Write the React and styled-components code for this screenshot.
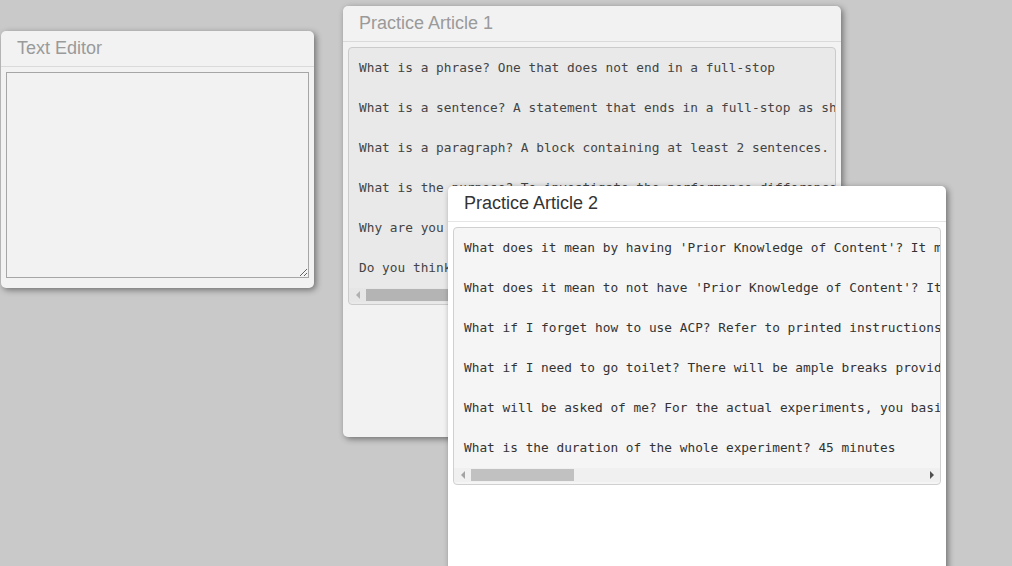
import React from 'react'
import styled, {createGlobalStyle} from 'styled-components'

const GlobalStyle = createGlobalStyle`
  html, body {
    margin: 0;
    padding: 0;
    background: #c9c9c9;
    overflow: hidden;
  }
  #root {
    width: 1012px;
    height: 566px;
  }
`

const Desktop = styled.div`
  position: relative;
  width: 1012px;
  height: 566px;
  background: #c9c9c9;
  overflow: hidden;
  font-family: "Liberation Sans", Arial, sans-serif;
`

// windows sit on a free canvas, so their place is given by props
const Window = styled.section`
  position: absolute;
  left: ${p => p.$x}px;
  top: ${p => p.$y}px;
  width: ${p => p.$w}px;
  height: ${p => p.$h}px;
  box-sizing: border-box;
  display: flex;
  flex-direction: column;
  background: ${p => p.$active ? '#ffffff' : '#f2f2f2'};
  border-radius: 5px;
  box-shadow: 2px 2px 6px rgba(0, 0, 0, 0.45);
  z-index: ${p => p.$z};
`

const Header = styled.header`
  height: 35px;
  flex: none;
  display: flex;
  align-items: center;
  padding: 0 16px;
  border-bottom: 1px solid ${p => p.$active ? '#e5e5e5' : '#dadada'};
`

const Title = styled.h3`
  margin: 0;
  font-size: 18px;
  font-weight: normal;
  color: ${p => p.$active ? '#333333' : '#9a9a9a'};
`

const Body = styled.div`
  flex: 1;
  display: flex;
  flex-direction: column;
  padding: 5px 5px 10px;
  min-height: 0;
`

const Editor = styled.textarea`
  box-sizing: border-box;
  width: 100%;
  height: 206px;
  margin: 0;
  background: #f2f2f2;
  border: 1px solid #a6a6a6;
  outline: none;
  resize: both;
  font-family: "Liberation Sans", Arial, sans-serif;
`

const Pre = styled.div`
  box-sizing: border-box;
  border: 1px solid ${p => p.$active ? '#d0d0d0' : '#cbcbcb'};
  border-radius: 4px;
  background: ${p => p.$active ? '#f5f5f5' : '#e9e9e9'};
  display: flex;
  flex-direction: column;
  overflow: hidden;
`

const Lines = styled.div`
  padding: 10px 10px 10px;
  overflow: hidden;
  white-space: pre;
  font-family: "DejaVu Sans Mono", "Liberation Mono", monospace;
  font-size: 12.8px;
  line-height: 20px;
  color: ${p => p.$active ? '#333333' : '#444444'};
`

const Line = styled.div`
  height: 20px;
  & + & {
    margin-top: 20px;
  }
`

const Track = styled.div`
  height: 14px;
  margin-bottom: 2px;
  display: flex;
  align-items: center;
  background: ${p => p.$active ? '#f0f0f0' : '#e6e6e6'};
`

const Arrow = styled.div`
  width: 17px;
  height: 14px;
  flex: none;
  display: flex;
  align-items: center;
  justify-content: center;
  &::before {
    content: '';
    width: 0;
    height: 0;
    border-top: 4px solid transparent;
    border-bottom: 4px solid transparent;
    ${p => p.$dir === 'left'
      ? `border-right: 4px solid ${p.$dim ? '#b0b0b0' : '#a3a3a3'};`
      : `border-left: 4px solid #505050;`}
  }
`

const Rail = styled.div`
  flex: 1;
  height: 12px;
`

const Thumb = styled.div`
  height: 12px;
  background: ${p => p.$active ? '#c1c1c1' : '#b4b4b4'};
`

const Scrollbar = ({active, thumb}) => (
  <Track $active={active}>
    <Arrow $dir="left" $dim={!active} />
    <Rail>
      <Thumb $active={active} style={{width: thumb}} />
    </Rail>
    <Arrow $dir="right" />
  </Track>
)

const article1 = [
  'What is a phrase? One that does not end in a full-stop',
  'What is a sentence? A statement that ends in a full-stop as shown in this example.',
  'What is a paragraph? A block containing at least 2 sentences.',
  'What is the purpose? To investigate the performance difference between the two methods.',
  'Why are you doing this? To find out which method works best for students.',
  'Do you think it will work? We will find out at the end of the experiment.',
]

const article2 = [
  "What does it mean by having 'Prior Knowledge of Content'? It means you have read the article before.",
  "What does it mean to not have 'Prior Knowledge of Content'? It means you have never read the article.",
  'What if I forget how to use ACP? Refer to printed instructions on the table.',
  'What if I need to go toilet? There will be ample breaks provided between tasks.',
  'What will be asked of me? For the actual experiments, you basically read and write.',
  'What is the duration of the whole experiment? 45 minutes',
]

const Article = ({title, lines, active, thumb, ...pos}) => (
  <Window $active={active} {...pos}>
    <Header $active={active}>
      <Title $active={active}>{title}</Title>
    </Header>
    <Body>
      <Pre $active={active}>
        <Lines $active={active}>
          {lines.map((l, i) => <Line key={i}>{l}</Line>)}
        </Lines>
        <Scrollbar active={active} thumb={thumb} />
      </Pre>
    </Body>
  </Window>
)

export default function App() {
  return (
    <>
      <GlobalStyle />
      <Desktop>
        <Window $x={1} $y={31} $w={313} $h={257} $z={1}>
          <Header>
            <Title>Text Editor</Title>
          </Header>
          <Body>
            <Editor />
          </Body>
        </Window>
        <Article title="Practice Article 1" lines={article1} thumb={120}
          $x={343} $y={6} $w={498} $h={431} $z={2} />
        <Article title="Practice Article 2" lines={article2} thumb={103} active
          $x={448} $y={186} $w={498} $h={431} $z={3} />
      </Desktop>
    </>
  )
}
